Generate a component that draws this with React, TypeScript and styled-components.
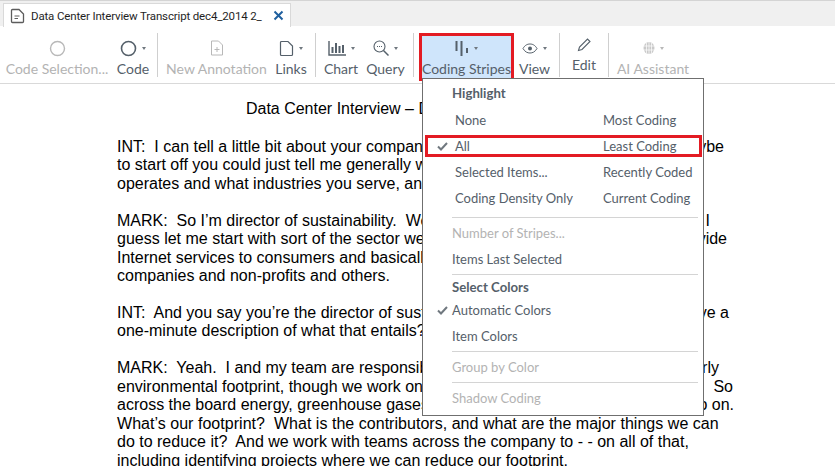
import React from "react";
import styled, { createGlobalStyle } from "styled-components";

const Global = createGlobalStyle`
  html, body { margin: 0; padding: 0; background: #fff; }
  body { width: 835px; height: 466px; overflow: hidden; }
`;

const Page = styled.div`
  position: relative;
  width: 835px;
  height: 466px;
  overflow: hidden;
  font-family: Lato, "Open Sans", sans-serif;
`;

const TabStrip = styled.div`
  height: 26px;
  background: #f0f0f0;
  border-top: 1px solid #d4d4d4;
  box-sizing: border-box;
  padding: 2px 0 0 3px;
  display: flex;
`;

const Tab = styled.div`
  width: 288px;
  height: 24px;
  background: #fff;
  border: 1px solid #d9d9d9;
  border-bottom: none;
  box-sizing: border-box;
  display: flex;
  align-items: center;
  padding-left: 6px;
  color: #1f1f1f;
`;

const TabTitle = styled.span`
  margin-left: 6px;
  width: 232px;
  white-space: nowrap;
  font-family: Roboto, sans-serif;
  font-size: 11.5px;
  letter-spacing: -0.15px;
`;

const TabClose = styled.svg`
  margin-left: 10px;
  flex: none;
`;

const Toolbar = styled.div`
  height: 58px;
  box-sizing: border-box;
  border-bottom: 1px solid #d9d9d9;
  display: flex;
  align-items: flex-start;
  padding: 7px 0 0 0;
`;

const ToolButton = styled.div<{ $w: number; $active?: boolean; $disabled?: boolean; $ml?: number; $flat?: boolean }>`
  width: ${(p) => p.$w}px;
  margin-left: ${(p) => p.$ml ?? 0}px;
  flex: none;
  height: ${(p) => (p.$active ? 48 : 45)}px;
  box-sizing: border-box;
  padding-top: ${(p) => (p.$flat ? 0 : 4)}px;
  display: flex;
  flex-direction: column;
  align-items: center;
  font-size: 14px;
  white-space: nowrap;
  color: ${(p) => (p.$disabled ? "#b3b3b3" : "#55606a")};
  background: ${(p) => (p.$active ? "#cfe5fb" : "transparent")};
  ${(p) => p.$active && "outline: 3px solid #e31b23; outline-offset: -3px;"}
`;

const IconRow = styled.div`
  height: 22px;
  display: flex;
  align-items: center;
  justify-content: center;
  gap: 5px;
`;

const Caret = styled.span<{ $disabled?: boolean }>`
  width: 0;
  height: 0;
  border-left: 2.5px solid transparent;
  border-right: 2.5px solid transparent;
  border-top: 3px solid ${(p) => (p.$disabled ? "#b8b8b8" : "#70787f")};
`;

const ToolLabel = styled.span`
  line-height: 19px;
`;

const Sep = styled.div<{ $ml: number }>`
  width: 1px;
  height: 44px;
  background: #cfcfcf;
  margin-left: ${(p) => p.$ml}px;
  flex: none;
`;

const Doc = styled.div`
  padding: 16px 0 0 117px;
  font-family: "Liberation Sans", Arial, sans-serif;
  font-size: 16px;
  line-height: 18.45px;
  color: #000;
  white-space: pre;
`;

const DocTitle = styled.div`
  width: 600px;
  text-align: center;
  margin-bottom: 19.4px;
  margin-left: -19px;
`;

const Para = styled.div`
  margin-bottom: 18.45px;
`;

const Line = styled.div<{ $ls?: number }>`
  letter-spacing: ${(p) => p.$ls ?? 0}px;
`;

const EndLine = styled.div<{ $w: number }>`
  width: ${(p) => p.$w}px;
  display: flex;
  justify-content: space-between;
`;

const Menu = styled.div`
  position: absolute;
  left: 422px;
  top: 78px;
  width: 282px;
  height: 338px;
  box-sizing: border-box;
  background: #fff;
  border: 1px solid #6f6f6f;
  font-size: 13px;
  color: #55606a;
  padding-top: 1px;
`;

const MenuHead = styled.div<{ $h: number }>`
  height: ${(p) => p.$h}px;
  line-height: 20px;
  padding-top: ${(p) => (p.$h > 20 ? 3 : 0)}px;
  box-sizing: border-box;
  font-weight: 700;
  font-size: 13.2px;
  padding-left: 29px;
`;

const MenuRow = styled.div`
  position: relative;
  height: 26px;
  line-height: 26px;
  display: grid;
  grid-template-columns: 148px 1fr;
  padding-left: 32px;
`;

const RedFrame = styled.div`
  position: absolute;
  left: 2px;
  right: 1px;
  top: 2px;
  bottom: 2px;
  border: 3px solid #e31b23;
`;

const MenuItem = styled.div<{ $disabled?: boolean }>`
  position: relative;
  height: 26px;
  line-height: 26px;
  padding-left: 29px;
  color: ${(p) => (p.$disabled ? "#b3b3b3" : "#55606a")};
`;

const Check = styled.svg<{ $left: number }>`
  position: absolute;
  left: ${(p) => p.$left}px;
  top: 9px;
`;

const MenuSep = styled.div<{ $mt: number; $mb: number }>`
  height: 1px;
  background: #d4d4d4;
  margin: ${(p) => p.$mt}px 5px ${(p) => p.$mb}px 29px;
`;

function Tick({ left }: { left: number }) {
  return (
    <Check $left={left} width="11" height="9" viewBox="0 0 11 9">
      <path d="M1 4.5 L4 7.5 L10 1" fill="none" stroke="#70787f" strokeWidth="2" />
    </Check>
  );
}

function App() {
  return (
    <Page>
      <Global />
      <TabStrip>
        <Tab>
          <svg width="15" height="16" viewBox="0 0 15 16">
            <path d="M1.5 2.5a1 1 0 0 1 1-1h6.5l4.5 4.5v7.5a1 1 0 0 1-1 1h-10a1 1 0 0 1-1-1z" fill="none" stroke="#5c5c5c" strokeWidth="1.3" />
            <path d="M4.5 8h5M4.5 10.5h3.5" stroke="#5c5c5c" />
          </svg>
          <TabTitle>Data Center Interview Transcript dec4_2014 2_</TabTitle>
          <TabClose width="11" height="11" viewBox="0 0 11 11">
            <path d="M1.5 1.5l8 8M9.5 1.5l-8 8" stroke="#1f5f9e" strokeWidth="2" />
          </TabClose>
        </Tab>
      </TabStrip>
      <Toolbar>
        <ToolButton $w={114} $disabled>
          <IconRow>
            <svg width="17" height="17" viewBox="0 0 17 17"><circle cx="8.5" cy="8.5" r="7" fill="none" stroke="#b8b8b8" strokeWidth="1.4" /></svg>
          </IconRow>
          <ToolLabel>Code Selection...</ToolLabel>
        </ToolButton>
        <ToolButton $w={38}>
          <IconRow>
            <svg width="17" height="17" viewBox="0 0 17 17"><circle cx="8.5" cy="8.5" r="7" fill="none" stroke="#55606a" strokeWidth="1.6" /></svg>
            <Caret />
          </IconRow>
          <ToolLabel>Code</ToolLabel>
        </ToolButton>
        <Sep $ml={5} />
        <ToolButton $w={117} $disabled>
          <IconRow>
            <svg width="14" height="16" viewBox="0 0 14 16">
              <path d="M1.5 1h7l4 4v10h-11z" fill="none" stroke="#b8b8b8" />
              <path d="M7 7v5M4.5 9.5h5" stroke="#b8b8b8" />
            </svg>
          </IconRow>
          <ToolLabel>New Annotation</ToolLabel>
        </ToolButton>
        <ToolButton $w={32}>
          <IconRow>
            <svg width="15" height="17" viewBox="0 0 15 17"><path d="M1.5 2.5a1 1 0 0 1 1-1h6.5l4.5 4.5v8.5a1 1 0 0 1-1 1h-10a1 1 0 0 1-1-1z" fill="none" stroke="#55606a" strokeWidth="1.2" /></svg>
            <Caret />
          </IconRow>
          <ToolLabel>Links</ToolLabel>
        </ToolButton>
        <Sep $ml={8} />
        <ToolButton $w={50}>
          <IconRow>
            <svg width="18" height="15" viewBox="0 0 18 15">
              <path d="M1 0v14h17" fill="none" stroke="#55606a" strokeWidth="1.4" />
              <path d="M4.5 6v6M8 2v10M11.5 5v7M15 4v8" stroke="#55606a" strokeWidth="2" />
            </svg>
            <Caret />
          </IconRow>
          <ToolLabel>Chart</ToolLabel>
        </ToolButton>
        <ToolButton $w={39}>
          <IconRow>
            <svg width="16" height="16" viewBox="0 0 16 16">
              <circle cx="6.5" cy="6.5" r="5.5" fill="none" stroke="#55606a" strokeWidth="1.1" />
              <path d="M10.5 10.5l5 5" stroke="#55606a" strokeWidth="1.5" />
              <path d="M4 6.500h5" stroke="#55606a" strokeDasharray="1 1" />
            </svg>
            <Caret />
          </IconRow>
          <ToolLabel>Query</ToolLabel>
        </ToolButton>
        <Sep $ml={8} />
        <ToolButton $w={95} $ml={5} $active>
          <IconRow>
            <svg width="14" height="16" viewBox="0 0 14 16">
              <path d="M1.500 1v10M6.500 1v15M12 8v5" stroke="#55606a" strokeWidth="2" />
            </svg>
            <Caret />
          </IconRow>
          <ToolLabel>Coding Stripes</ToolLabel>
        </ToolButton>
        <ToolButton $w={41}>
          <IconRow>
            <svg width="16" height="11" viewBox="0 0 16 11">
              <path d="M1 5.500C3 2 5.500 1 8 1s5 1 7 4.500C13 9 10.500 10 8 10S3 9 1 5.500z" fill="none" stroke="#55606a" />
              <circle cx="8" cy="5.500" r="2" fill="#55606a" />
            </svg>
            <Caret />
          </IconRow>
          <ToolLabel>View</ToolLabel>
        </ToolButton>
        <Sep $ml={4} />
        <ToolButton $w={48} $flat>
          <IconRow>
            <svg width="15" height="15" viewBox="0 0 15 15">
              <path d="M1.500 13.500l1-3.500 8-8 2.500 2.500-8 8z" fill="none" stroke="#55606a" strokeWidth="1.100" />
            </svg>
          </IconRow>
          <ToolLabel>Edit</ToolLabel>
        </ToolButton>
        <Sep $ml={0} />
        <ToolButton $w={88} $disabled>
          <IconRow>
            <svg width="12" height="14" viewBox="0 0 12 14">
              <ellipse cx="6" cy="7" rx="5.500" ry="6" fill="#c9c9c9" />
              <path d="M6 1v12M3.500 2v10M8.500 2v10M0.500 5h11M0.500 9h11" stroke="#fff" strokeWidth="0.700" />
            </svg>
            <Caret $disabled />
          </IconRow>
          <ToolLabel>AI Assistant</ToolLabel>
        </ToolButton>
      </Toolbar>
      <Doc>
        <DocTitle>Data Center Interview – December 4, 2014</DocTitle>
        <Para>
          <EndLine $w={607}><span>{"INT:  I can tell a little bit about your company and why we"}</span><span>are here today, so maybe</span></EndLine>
          <Line>{"to start off you could just tell me generally what your company does, how it"}</Line>
          <Line>{"operates and what industries you serve, and so on."}</Line>
        </Para>
        <Para>
          <EndLine $w={593}><span>{"MARK:  So I’m director of sustainability.  We’re a large"}</span><span>telecom company, so.  I</span></EndLine>
          <EndLine $w={610}><span>{"guess let me start with sort of the sector we’re in, in which"}</span><span>we basically provide</span></EndLine>
          <Line>{"Internet services to consumers and basically large enterprises,"}</Line>
          <Line>{"companies and non-profits and others."}</Line>
        </Para>
        <Para>
          <EndLine $w={612}><span>{"INT:  And you say you’re the director of sustainability."}</span><span>Could you maybe give a</span></EndLine>
          <Line>{"one-minute description of what that entails?"}</Line>
        </Para>
        <Para>
          <EndLine $w={602}><span>{"MARK:  Yeah.  I and my team are responsible for our"}</span><span>company’s, particularly</span></EndLine>
          <EndLine $w={616}><span>{"environmental footprint, though we work on a range of"}</span><span>broader issues too.     So</span></EndLine>
          <EndLine $w={617}><span>{"across the board energy, greenhouse gases, water, waste,"}</span><span>and so on and so on.</span></EndLine>
          <Line $ls={0.03}>{"What’s our footprint?  What is the contributors, and what are the major things we can"}</Line>
          <Line>{"do to reduce it?  And we work with teams across the company to - - on all of that,"}</Line>
          <Line>{"including identifying projects where we can reduce our footprint."}</Line>
        </Para>
      </Doc>
      <Menu>
        <MenuHead $h={27}>Highlight</MenuHead>
        <MenuRow><span>None</span><span>Most Coding</span></MenuRow>
        <MenuRow><RedFrame /><Tick left={14} /><span>All</span><span>Least Coding</span></MenuRow>
        <MenuRow><span>Selected Items...</span><span>Recently Coded</span></MenuRow>
        <MenuRow><span>Coding Density Only</span><span>Current Coding</span></MenuRow>
        <MenuSep $mt={6} $mb={2} />
        <MenuItem $disabled>Number of Stripes...</MenuItem>
        <MenuItem>Items Last Selected</MenuItem>
        <MenuSep $mt={2} $mb={2} />
        <MenuHead $h={20}>Select Colors</MenuHead>
        <MenuItem><Tick left={14} />Automatic Colors</MenuItem>
        <MenuItem>Item Colors</MenuItem>
        <MenuSep $mt={2} $mb={2} />
        <MenuItem $disabled>Group by Color</MenuItem>
        <MenuSep $mt={2} $mb={2} />
        <MenuItem $disabled>Shadow Coding</MenuItem>
      </Menu>
    </Page>
  );
}

export default App;
